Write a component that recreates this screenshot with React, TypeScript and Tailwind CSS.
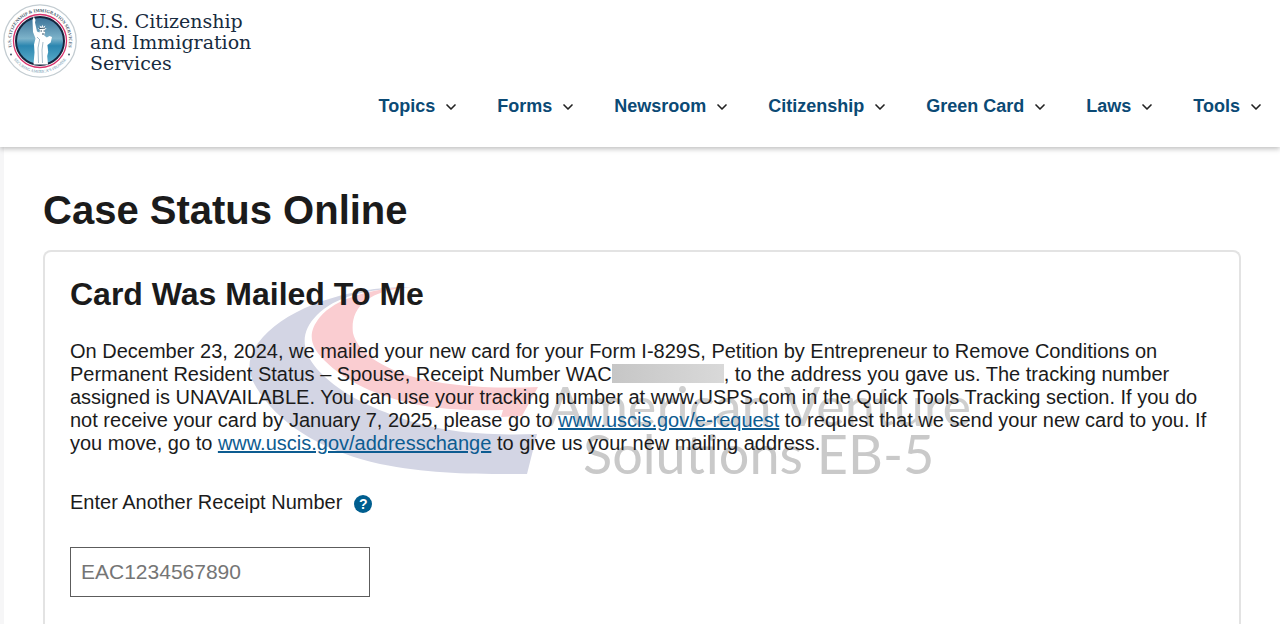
import { ChevronDown } from "lucide-react"

const navItems = ["Topics", "Forms", "Newsroom", "Citizenship", "Green Card", "Laws", "Tools"]

function Seal() {
  return (
    <svg viewBox="0 0 76 76" className="h-[76px] w-[76px] shrink-0" role="img" aria-label="USCIS seal">
      <defs>
        <linearGradient id="sky" x1="0" y1="0" x2="0" y2="1">
          <stop offset="0" stopColor="#3a7197" />
          <stop offset="0.45" stopColor="#7db3ca" />
          <stop offset="0.6" stopColor="#2b86b0" />
          <stop offset="1" stopColor="#5fb0cc" />
        </linearGradient>
        <path id="arc-top" d="M11.700 50.200A29 29 0 1 1 64.300 50.200" />
        <path id="arc-bottom" d="M9 52A32.500 32.500 0 0 0 67 52" />
      </defs>
      <circle cx="38" cy="38" r="36.200" fill="#fff" stroke="#c3ccd1" strokeWidth="1.300" />
      <circle cx="38" cy="38" r="26.500" fill="#fff" stroke="#d6336c" strokeWidth="1.300" />
      <circle cx="38" cy="38" r="24" fill="url(#sky)" stroke="#14263f" strokeWidth="2" />
      {/* statue */}
      <path
        d="M30.500 17l1.300-3.500 1.700 3.500-.5 2.500 2 9 2.500 1 .5-2.500-2-2 2.300-.1-.8-2.400 2 1.400.8-2.200 1 2.200 2-1.400-.6 2.400 2 .4-1.800 1.400.2 3.500-.9 2.300 2.600 2 2.700-1.500 2.500 1-1.300 5.500-3.300 2.500.8 7-1 4 .8 8.500H31.500l1-12-.5-8 1.500-6-2.500-6.500z"
        fill="#fff"
      />
      <path d="M37.500 37l-1.500 8 .5 15M41 39l-1 8 .5 13M35 34l3 3" fill="none" stroke="#7f9fb1" strokeWidth="0.700" />
      <path d="M37.200 25.500l6-.4M38.500 28h1.500M41.500 28h1.500M40 31h2.500" fill="none" stroke="#2b4a60" strokeWidth="1" />
      <text fontFamily="Liberation Serif, serif" fontSize="4.600" fontWeight="700" fill="#4a5c6e">
        <textPath href="#arc-top" startOffset="50%" textAnchor="middle">
          U.S. CITIZENSHIP &amp; IMMIGRATION SERVICES
        </textPath>
      </text>
      <text fontFamily="Liberation Serif, serif" fontSize="4" fill="#5c8ca6">
        <textPath href="#arc-bottom" startOffset="50%" textAnchor="middle">
          SECURING AMERICA’S PROMISE
        </textPath>
      </text>
      <circle cx="9" cy="51.500" r="0.900" fill="#33475b" />
      <circle cx="67" cy="51.500" r="0.900" fill="#33475b" />
    </svg>
  )
}

function Watermark() {
  return (
    <div aria-hidden="true" className="pointer-events-none absolute inset-0 select-none">
      <svg viewBox="245 285 295 192" className="absolute left-[200px] top-[33px] h-[192px] w-[295px]">
        <path
          d="M412 287C350 286 290 307 263 337C246 356 245 372 260 393C284 429 330 453 380 464C430 474 470 474 527 474L537 434C480 436 440 431 407 420C367 407 337 391 317 369C301 350 300 332 317 315C335 297 365 289 412 287Z"
          fill="#d3d5e4"
        />
        <path
          d="M412 287C370 288 335 299 320 317C307 333 310 346 324 360C346 382 377 396 414 404C440 409 465 411 503 410L501 417L522 416L538 387C490 389 445 386 410 376C376 365 357 350 353 333C350 310 365 290 412 287Z"
          fill="#facdd1"
        />
      </svg>
      <div className="absolute left-[502px] top-[126px] whitespace-nowrap font-[Lato,sans-serif] text-[54px] leading-[56px] text-[#cfcfcf]">
        American Venture
      </div>
      <div className="absolute left-[538px] top-[174px] whitespace-nowrap font-[Lato,sans-serif] text-[54px] leading-[56px] text-[#c9c9c9]">
        Solutions EB-5
      </div>
    </div>
  )
}

function Header() {
  return (
    <header className="relative z-10 h-[147px] shrink-0 bg-white shadow-[0_2px_5px_rgba(0,0,0,0.25)]">
      <a href="#" className="flex w-fit items-start gap-3 pl-[2px] pt-[3px]">
        <Seal />
        <span className="pt-2 font-['DejaVu_Serif',serif] text-[19px] leading-[21px] text-[#172b40]">
          U.S. Citizenship
          <br />
          and Immigration
          <br />
          Services
        </span>
      </a>
      <nav className="flex justify-end gap-[38px] pr-4 pt-[14px]">
        {navItems.map((item) => (
          <button key={item} type="button" className="flex items-center gap-2 text-[18px] font-bold leading-[26px] text-[#0b4a75]">
            {item}
            <ChevronDown className="mt-[2px] h-4 w-4 text-[#222]" strokeWidth={2.5} />
          </button>
        ))}
      </nav>
    </header>
  )
}

export default function App() {
  return (
    <div className="flex h-screen flex-col overflow-hidden bg-white font-['Liberation_Sans',Arial,sans-serif] text-[#1b1b1b]">
      <Header />
      <main className="flex flex-1 flex-col border-l-4 border-[#f6f6f7] pl-[39px] pr-[39px] pt-[39px]">
        <h1 className="text-[40px] font-bold leading-[48px]">Case Status Online</h1>
        <section className="relative mt-4 flex-1 rounded-t-lg border-2 border-b-0 border-[#e3e3e3] px-[25px] pt-[22px]">
          <Watermark />
          <div className="relative">
            <h2 className="text-[32px] font-bold leading-[40px]">Card Was Mailed To Me</h2>
            <p className="mt-[26px] text-[20px] leading-[23px]">
              On December 23, 2024, we mailed your new card for your Form I-829S, Petition by Entrepreneur to Remove
              Conditions on Permanent Resident Status – Spouse, Receipt Number WAC
              <span className="inline-block h-[19px] w-[112px] bg-linear-to-r from-[#c6c6c6] to-[#d9d9d9] align-[-2px]" />, to
              the address you gave us. The tracking number assigned is UNAVAILABLE. You can use your tracking number at
              www.USPS.com in the Quick Tools Tracking section. If you do not receive your card by January 7, 2025,
              please go to{" "}
              <a href="#" className="text-[#0d5c91] underline">
                www.uscis.gov/e-request
              </a>{" "}
              to request that we send your new card to you. If you move, go to{" "}
              <a href="#" className="text-[#0d5c91] underline">
                www.uscis.gov/addresschange
              </a>{" "}
              to give us your new mailing address.
            </p>
            <div className="mt-[35px] flex items-center gap-3">
              <label htmlFor="receipt" className="text-[20px] leading-[24px]">
                Enter Another Receipt Number
              </label>
              <button
                type="button"
                aria-label="Help"
                className="mt-[3px] flex h-[18px] w-[18px] items-center justify-center rounded-full bg-[#005e8f] text-[14px] font-bold leading-[18px] text-white"
              >
                ?
              </button>
            </div>
            <input
              id="receipt"
              type="text"
              placeholder="EAC1234567890"
              className="mt-[33px] block h-[50px] w-[300px] border border-[#5c5c5c] bg-white px-[10px] text-[21px] placeholder:text-[#757575]"
            />
          </div>
        </section>
      </main>
    </div>
  )
}
